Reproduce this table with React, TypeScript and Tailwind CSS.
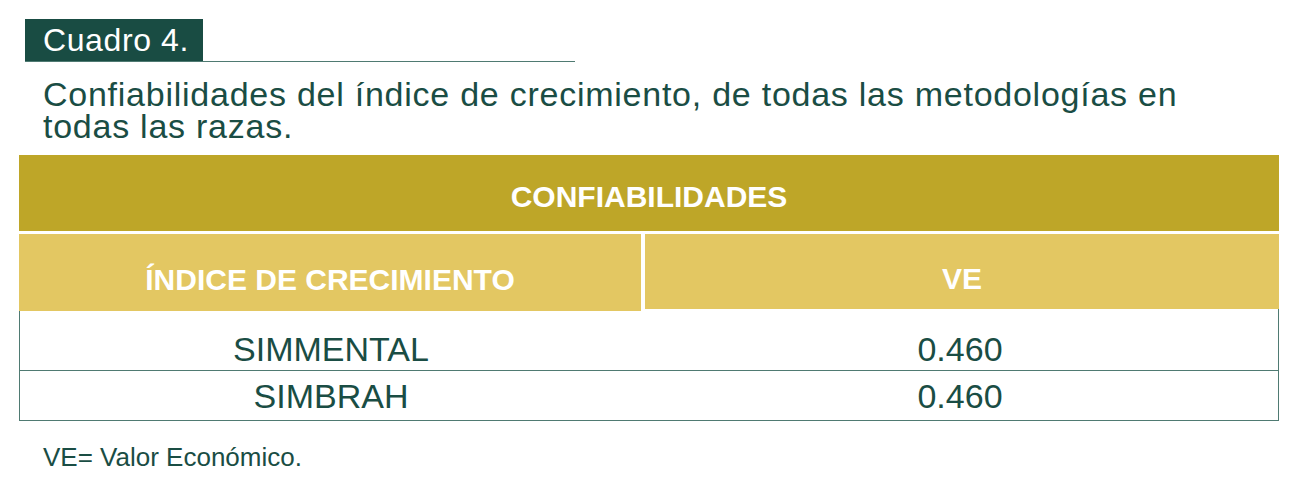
export default function App() {
  return (
    <div className="w-[1300px] h-[488px] bg-white text-[#1a4d44] font-['Liberation_Sans',Arial,sans-serif]">
      <div className="pt-[19px] pl-[25px]">
        <div className="w-[550px] border-b border-[#4f7a72] flex">
          <div className="bg-[#194c43] text-white text-[32px] leading-[42px] pl-[18px] w-[178px] tracking-[0.6px]">
            Cuadro 4.
          </div>
        </div>
      </div>
      <p className="pl-[43px] mt-[16px] text-[34px] leading-[32px] tracking-[0.75px]">
        Confiabilidades del índice de crecimiento, de todas las metodologías en
        <br />
        todas las razas.
      </p>
      <div className="mx-[19px] w-[1260px] mt-[13px]">
        <div className="bg-[#bea628] h-[76px] pt-[6px] flex items-center justify-center text-white font-bold text-[30px]">
          CONFIABILIDADES
        </div>
        <div className="flex items-start gap-[4px] mt-[3px] text-white font-bold text-[30px]">
          <div className="w-[622px] h-[77px] pt-[13px] bg-[#e3c762] flex items-center justify-center">ÍNDICE DE CRECIMIENTO</div>
          <div className="flex-1 h-[75px] pt-[13px] bg-[#e3c762] flex items-center justify-center">VE</div>
        </div>
        <div className="border-x border-b border-[#4f7a72] text-[34px] leading-[34px] -mt-[2px]">
          <div className="flex h-[62px] items-end pb-[4px] border-b border-[#4f7a72]">
            <div className="w-[622px] text-center">SIMMENTAL</div>
            <div className="flex-1 text-center">0.460</div>
          </div>
          <div className="flex h-[49px] items-center">
            <div className="w-[622px] text-center">SIMBRAH</div>
            <div className="flex-1 text-center">0.460</div>
          </div>
        </div>
      </div>
      <p className="pl-[43px] mt-[22px] text-[26px] leading-[28px]">VE= Valor Económico.</p>
    </div>
  );
}
